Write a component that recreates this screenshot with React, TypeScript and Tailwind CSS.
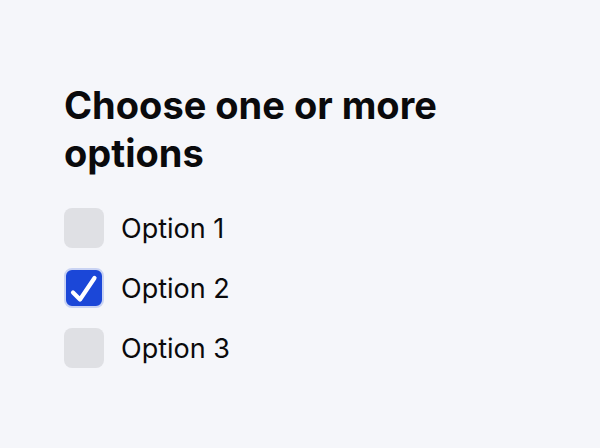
import React, { useState } from "react";

export default function App() {
  const [checked, setChecked] = useState<boolean[]>([false, true, false]);
  const options = ["Option 1", "Option 2", "Option 3"];
  return (
    <div className="min-h-[448px] w-full bg-[#f5f6fa] px-16 pt-[81px] text-[#0a0a0c]" style={{ fontFamily: "Inter, 'Noto Sans', sans-serif" }}>
      <h1 className="w-[420px] text-[38px] font-bold leading-[48px]">Choose one or more options</h1>
      <div className="mt-[31px] flex flex-col gap-5">
        {options.map((o, i) => (
          <label key={o} className="flex items-center gap-[17px] cursor-pointer" onClick={() => setChecked(c => c.map((v, j) => (j === i ? !v : v)))}>
            {checked[i] ? (
              <span className="flex h-10 w-10 items-center justify-center rounded-lg border-2 border-[#c9d3f3] bg-[#1b47d8]">
                <svg width="36" height="36" viewBox="0 0 36 36" fill="none" stroke="white" strokeWidth="4.2" strokeLinecap="round" strokeLinejoin="round">
                  <path d="M7 22.5l7 7L28.5 8" />
                </svg>
              </span>
            ) : (
              <span className="h-10 w-10 rounded-lg bg-[#dfe0e4]" />
            )}
            <span className="text-[27px] leading-none">{o}</span>
          </label>
        ))}
      </div>
    </div>
  );
}
